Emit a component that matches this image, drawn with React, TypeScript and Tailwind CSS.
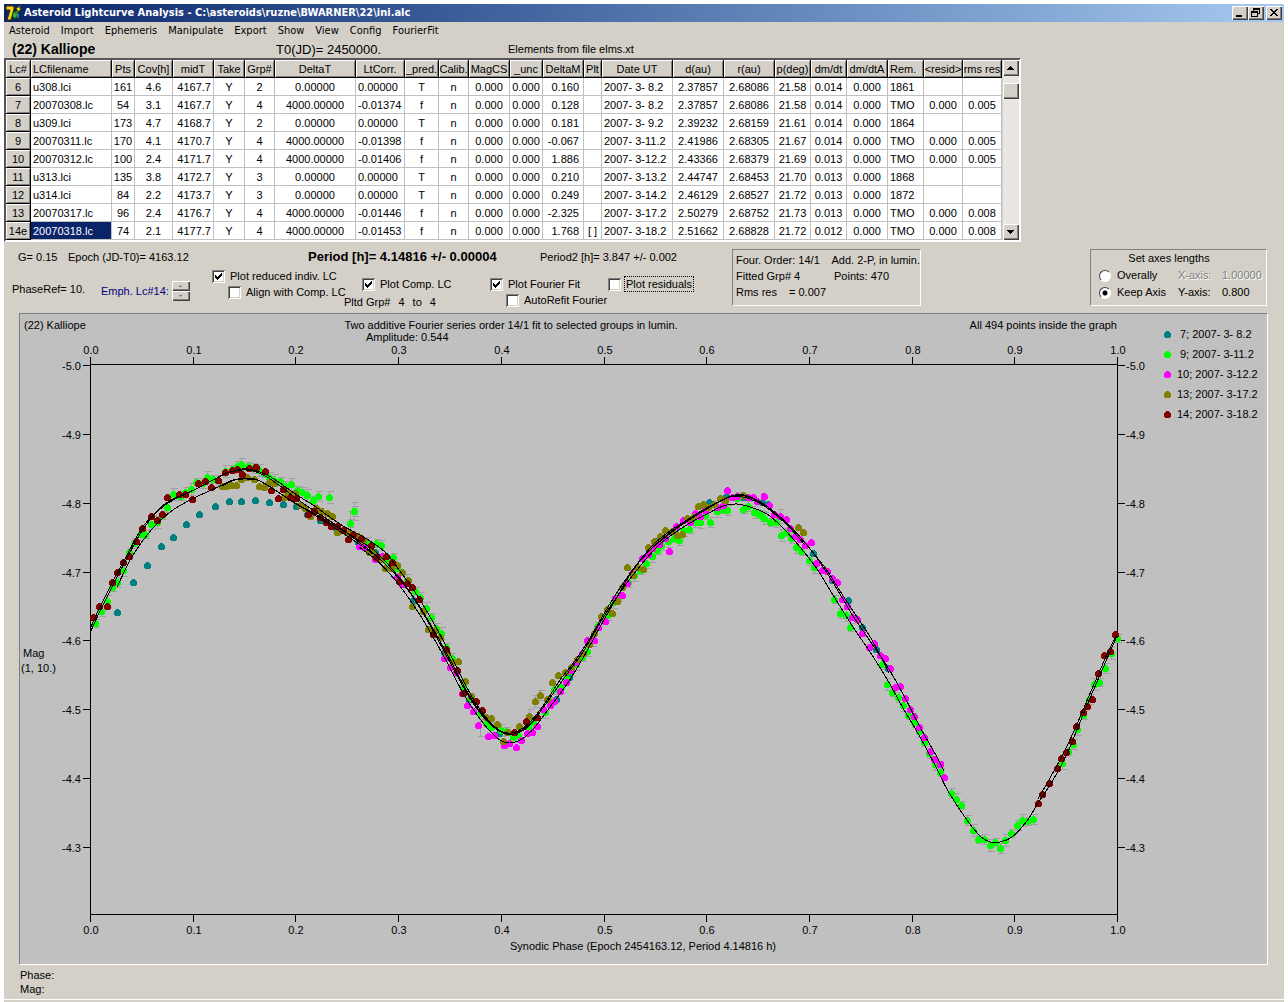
import { useState } from 'react';
import type { ReactNode } from 'react';
import clsx from 'clsx';

interface Column {
  title: string;
  width: number;
  align?: string;
}

interface Series {
  label: string;
  labelX: number;
  color: string;
  points: string;
}

const menuItems = ['Asteroid', 'Import', 'Ephemeris', 'Manipulate', 'Export', 'Show', 'View', 'Config', 'FourierFit'];

const columns: Column[] = [
  { title: 'Lc#', width: 25 },
  { title: 'LCfilename', width: 81, align: 'text-left pl-0.5' },
  { title: 'Pts', width: 23 },
  { title: 'Cov[h]', width: 38 },
  { title: 'midT', width: 41, align: 'text-right pr-0.5' },
  { title: 'Take', width: 31 },
  { title: 'Grp#', width: 30 },
  { title: 'DeltaT', width: 81 },
  { title: 'LtCorr.', width: 49, align: 'text-left pl-0.5' },
  { title: '_pred.', width: 34 },
  { title: 'Calib.', width: 30 },
  { title: 'MagCS', width: 41 },
  { title: '_unc', width: 33 },
  { title: 'DeltaM', width: 41, align: 'text-right pr-1' },
  { title: 'Plt', width: 18 },
  { title: 'Date UT', width: 71, align: 'text-left pl-0.5' },
  { title: 'd(au)', width: 51 },
  { title: 'r(au)', width: 51 },
  { title: 'p(deg)', width: 36 },
  { title: 'dm/dt', width: 36 },
  { title: 'dm/dtA', width: 41 },
  { title: 'Rem.', width: 36, align: 'text-left pl-0.5' },
  { title: '<resid>', width: 39 },
  { title: 'rms res', width: 39 },
];

const rows = [
  ['6', 'u308.lci', '161', '4.6', '4167.7', 'Y', '2', '0.00000', '0.00000', 'T', 'n', '0.000', '0.000', '0.160', '', '2007- 3- 8.2', '2.37857', '2.68086', '21.58', '0.014', '0.000', '1861', '', ''],
  ['7', '20070308.lc', '54', '3.1', '4167.7', 'Y', '4', '4000.00000', '-0.01374', 'f', 'n', '0.000', '0.000', '0.128', '', '2007- 3- 8.2', '2.37857', '2.68086', '21.58', '0.014', '0.000', 'TMO', '0.000', '0.005'],
  ['8', 'u309.lci', '173', '4.7', '4168.7', 'Y', '2', '0.00000', '0.00000', 'T', 'n', '0.000', '0.000', '0.181', '', '2007- 3- 9.2', '2.39232', '2.68159', '21.61', '0.014', '0.000', '1864', '', ''],
  ['9', '20070311.lc', '170', '4.1', '4170.7', 'Y', '4', '4000.00000', '-0.01398', 'f', 'n', '0.000', '0.000', '-0.067', '', '2007- 3-11.2', '2.41986', '2.68305', '21.67', '0.014', '0.000', 'TMO', '0.000', '0.005'],
  ['10', '20070312.lc', '100', '2.4', '4171.7', 'Y', '4', '4000.00000', '-0.01406', 'f', 'n', '0.000', '0.000', '1.886', '', '2007- 3-12.2', '2.43366', '2.68379', '21.69', '0.013', '0.000', 'TMO', '0.000', '0.005'],
  ['11', 'u313.lci', '135', '3.8', '4172.7', 'Y', '3', '0.00000', '0.00000', 'T', 'n', '0.000', '0.000', '0.210', '', '2007- 3-13.2', '2.44747', '2.68453', '21.70', '0.013', '0.000', '1868', '', ''],
  ['12', 'u314.lci', '84', '2.2', '4173.7', 'Y', '3', '0.00000', '0.00000', 'T', 'n', '0.000', '0.000', '0.249', '', '2007- 3-14.2', '2.46129', '2.68527', '21.72', '0.013', '0.000', '1872', '', ''],
  ['13', '20070317.lc', '96', '2.4', '4176.7', 'Y', '4', '4000.00000', '-0.01446', 'f', 'n', '0.000', '0.000', '-2.325', '', '2007- 3-17.2', '2.50279', '2.68752', '21.73', '0.013', '0.000', 'TMO', '0.000', '0.008'],
  ['14e', '20070318.lc', '74', '2.1', '4177.7', 'Y', '4', '4000.00000', '-0.01453', 'f', 'n', '0.000', '0.000', '1.768', '[ ]', '2007- 3-18.2', '2.51662', '2.68828', '21.72', '0.012', '0.000', 'TMO', '0.000', '0.008'],
];

// Drawn in this order, later nights cover earlier ones
const series: Series[] = [
  {
    label: '7; 2007- 3- 8.2',
    labelX: 1180,
    color: '#008080',
    points:
      '117,612 133,582 147,565 161,546 173,537 186,524 199,514 215,506 229,501 241,501 255,500 269,502 283,504 296,506 307,514 320,520 335,527 358,542 375,552 413,600 444,652 469,699 491,727 499,733 556,699 569,677 655,541 709,502 726,496 743,497 762,502 768,504 813,553 832,580 848,600 862,627 876,649 888,668',
  },
  {
    label: '9; 2007- 3-11.2',
    labelX: 1180,
    color: '#00ff00',
    points:
      '95,623 101,611 107,601 112,587 117,582 123,570 129,552 134,543 140,534 145,534 151,524 157,522 162,515 167,507 173,494 180,496 185,492 191,489 196,482 202,483 207,477 213,479 218,480 225,471 232,469 237,466 241,464 248,466 253,468 259,470 264,473 269,477 274,480 280,481 285,486 291,484 297,490 302,492 307,495 313,500 318,496 329,497 350,523 354,511 367,543 376,543 381,545 387,561 393,557 397,568 407,580 415,591 420,597 426,608 431,617 436,628 441,633 446,647 452,658 457,670 463,687 470,698 480,713 486,723 491,727 501,730 506,731 513,737 518,735 528,727 533,722 545,712 550,701 554,689 561,687 566,678 571,671 576,664 582,657 587,651 592,640 597,626 607,615 613,602 618,597 628,582 634,575 640,570 646,563 652,556 657,550 661,545 668,541 674,538 679,540 683,530 689,529 695,522 700,522 705,515 710,522 717,511 722,509 727,510 737,498 743,509 748,506 754,512 759,514 762,516 764,518 770,522 776,522 781,535 786,532 791,538 796,547 801,551 809,560 814,567 834,599 840,613 846,615 850,627 882,664 887,684 892,692 898,697 903,705 908,715 914,722 919,731 924,742 929,753 935,764 940,772 951,793 956,799 961,805 967,820 973,830 978,839 984,839 990,845 995,842 1000,848 1005,840 1011,833 1017,825 1022,820 1027,821 1033,819 1062,763 1068,751 1073,744 1077,729 1083,715 1089,699 1094,684 1099,682 1105,668 1111,653 1117,638',
  },
  {
    label: '10; 2007- 3-12.2',
    labelX: 1177,
    color: '#ff00ff',
    points:
      '359,546 364,547 375,559 382,556 397,577 402,584 444,658 450,667 456,672 462,693 467,705 473,711 478,725 488,736 494,735 504,745 509,743 516,747 521,740 527,733 532,732 537,726 543,709 550,705 554,701 560,691 566,682 571,670 576,662 582,653 587,640 594,640 598,627 605,621 615,598 622,595 627,583 632,573 642,558 648,554 652,548 659,544 665,538 669,551 676,526 683,520 690,522 695,513 700,516 705,510 717,507 723,505 727,490 732,497 737,496 748,497 753,497 757,501 764,496 769,505 774,514 780,516 786,519 790,528 795,536 800,539 805,545 811,542 816,563 822,570 827,571 832,578 837,582 842,599 847,606 852,617 857,619 862,633 869,647 874,643 880,655 885,658 890,668 895,687 900,686 905,698 910,709 914,716 919,727 924,737 930,751 934,759 940,764 944,777',
  },
  {
    label: '13; 2007- 3-17.2',
    labelX: 1177,
    color: '#808000',
    points:
      '222,486 226,486 231,485 236,485 241,479 247,477 254,479 259,486 264,487 269,482 274,483 284,497 288,493 295,493 300,505 305,508 310,516 316,508 321,511 327,513 332,516 337,532 349,532 358,536 363,540 369,552 372,551 378,558 381,559 385,568 391,568 397,565 402,572 408,580 412,606 423,611 428,629 435,630 440,637 447,653 453,662 458,661 465,681 471,696 486,717 491,718 497,724 503,741 507,732 519,726 529,716 535,701 540,695 547,699 552,682 558,675 565,672 571,667 577,659 583,653 589,644 594,633 601,616 607,609 612,613 617,601 622,587 627,567 633,575 637,567 643,569 648,547 654,541 660,536 665,530 672,531 677,535 682,534 687,518 693,517 698,506 703,504 708,507 714,504 720,498 725,500 743,495 798,527 803,532',
  },
  {
    label: '14; 2007- 3-18.2',
    labelX: 1177,
    color: '#800000',
    points:
      '93,617 99,606 107,606 112,582 117,572 123,562 129,556 136,541 142,528 151,516 157,520 162,514 167,497 179,494 185,494 192,499 198,483 205,481 211,487 218,480 225,472 232,470 237,469 242,474 249,468 256,467 265,471 271,490 278,498 283,489 290,497 296,498 308,514 314,511 320,517 326,522 331,526 337,526 343,530 348,539 353,534 361,538 371,545 376,557 386,556 392,562 399,581 407,583 412,587 419,599 433,634 446,649 457,670 463,693 476,701 482,710 514,732 526,721 537,717 1038,803 1042,794 1049,783 1057,768 1061,758 1066,752 1072,741 1076,726 1083,712 1087,706 1092,699 1098,673 1104,655 1110,651 1115,634',
  },
];

const curves = [
  '90,629 100,607 113,581 127,555 142,528 160,508 173,499 185,494 200,487 213,480 227,473 242,469 253,470 267,475 280,483 297,495 313,505 327,515 343,526 360,535 376,545 387,554 397,567 410,585 420,600 437,629 452,658 465,684 477,705 490,722 503,732 517,732 530,724 543,708 557,688 570,670 583,652 597,628 610,607 633,575 657,547 673,534 690,523 707,514 723,506 737,504 750,507 767,514 783,528 800,547 817,569 833,595 853,627 870,652 887,679 903,708 920,737 937,769 948,791 967,820 980,836 990,842 1000,842 1012,837 1027,821 1038,803 1053,780 1067,754 1078,727 1090,698 1103,668 1117,636',
  '90,633 101,609 113,585 127,558 142,531 158,511 173,500 186,494 200,487 213,480 227,473 242,470 253,471 267,477 280,486 297,499 313,510 327,519 343,530 360,543 373,553 390,569 405,586 420,608 437,638 452,666 465,690 477,709 490,724 503,733 514,734 527,728 540,713',
  '117,587 133,555 152,529 170,512 190,500 207,492 222,485 233,480 247,478 258,480 273,489 293,502 313,514 333,527 353,540 373,554',
  '222,486 235,480 247,479 260,481 275,490 295,503 315,514 335,526 355,538 375,551 393,570 410,592 425,615 440,641 453,665 465,688 478,709 492,725 506,733 518,731 530,722 545,703 560,680 575,661 590,638 605,612 620,588 637,564 653,545 670,531 687,520 703,510 718,502 732,496 745,496 757,501 771,511 788,526 805,545',
  '359,547 375,559 390,574 403,590 420,615 437,644 450,668 463,693 475,712 488,729 500,740 510,743 522,739 535,727 550,707 567,684 583,658 600,627 617,597 633,570 650,550 667,536 683,524 700,513 717,503 730,497 743,497 757,502 773,512 790,527 807,545 823,567 840,594 853,616 870,641 887,666 903,694 920,727 937,757 944,771',
  '655,545 672,531 690,519 707,509 722,500 735,495 748,496 762,503 778,515 795,531 810,549 826,569 840,591 855,614 872,640 889,673',
  '1038,799 1050,778 1062,756 1074,731 1086,703 1098,675 1109,650 1117,635',
];

const ticksX = [90, 193, 295, 398, 501, 604, 706, 809, 912, 1014, 1117];
const ticksY = [365, 434, 503, 572, 640, 709, 778, 847];

function parse(points: string) {
  return points.split(' ').map(p => p.split(',').map(Number));
}

// Catmull-Rom spline through the points
function smooth(points: string) {
  const p = parse(points);
  let d = `M${p[0][0]} ${p[0][1]}`;
  for (let i = 0; i < p.length - 1; i++) {
    const a = p[Math.max(i - 1, 0)];
    const b = p[i];
    const c = p[i + 1];
    const e = p[Math.min(i + 2, p.length - 1)];
    d += `C${b[0] + (c[0] - a[0]) / 6} ${b[1] + (c[1] - a[1]) / 6} ${c[0] - (e[0] - b[0]) / 6} ${c[1] - (e[1] - b[1]) / 6} ${c[0]} ${c[1]}`;
  }
  return d;
}

function errorBar(x: number, y: number, e: number) {
  return `M${x - 3} ${y - e}h7M${x - 3} ${y + e}h7M${x} ${y - e}v${2 * e}`;
}

const raised =
  'bg-[#d4d0c8] shadow-[inset_1px_1px_0_#fff,inset_-1px_-1px_0_#404040,inset_-2px_-2px_0_#808080]';

function TitleButton({ label, children }: { label: string; children: ReactNode }) {
  return (
    <button aria-label={label} className={clsx('w-4 h-3.5', raised)}>
      <svg viewBox="0 0 16 14" className="w-4 h-3.5" shapeRendering="crispEdges">
        {children}
      </svg>
    </button>
  );
}

function TitleBar() {
  return (
    <header className="flex items-center h-[18px] pl-0.5 pr-0.5 bg-linear-to-r from-[#0a246a] to-[#a6caf0]">
      <svg viewBox="0 0 16 16" className="w-4 h-4">
        <circle cx="9.5" cy="10" r="4.5" fill="#0b5a3c" stroke="#001a10" />
        <path d="M7 8l3-1 1 3-2 3-2-2z" fill="#2fb344" />
        <path d="M11 9l2 0 0 3-2 1z" fill="#3a6fd8" />
        <path d="M0 1h8v3L5 15H1L4 5H0z" fill="#f5d21c" stroke="#3a2a00" />
        <path d="M15 0l-5 4 2 1-3 4 6-5-2-1z" fill="#ffff00" stroke="#4d4d00" strokeWidth="0.5" />
      </svg>
      <h1 className="ml-0.5 font-['DejaVu_Sans_Condensed','DejaVu_Sans',sans-serif] text-[11px] font-bold text-white whitespace-nowrap">
        Asteroid Lightcurve Analysis - C:\asteroids\ruzne\BWARNER\22\ini.alc
      </h1>
      <div className="flex ml-auto">
        <TitleButton label="Minimize">
          <path d="M4 9h6v2H4z" />
        </TitleButton>
        <TitleButton label="Restore">
          <path d="M5 2h7v6h-2V7h1V4H6v1H5zM3 5h7v6H3zM4 7v3h5V7z" fillRule="evenodd" />
        </TitleButton>
        <span className="w-0.5" />
        <TitleButton label="Close">
          <path d="M4 3h2v1h1v1h2V4h1V3h2v1h-1v1h-1v1H9v1h1v1h1v1h1v1h-2V9H9V8H7v1H6v1H4V9h1V8h1V7h1V6H6V5H5V4H4z" />
        </TitleButton>
      </div>
    </header>
  );
}

function LightcurveTable() {
  return (
    <div className="flex w-fit border-2 border-t-[#555] border-l-[#555] border-r-white border-b-white">
      <table className="w-[996px] table-fixed border-separate border-spacing-0 bg-white leading-4">
        <colgroup>
          {columns.map(col => (
            <col key={col.title} style={{ width: col.width }} />
          ))}
        </colgroup>
        <thead>
          <tr>
            {columns.map(col => (
              <th
                key={col.title}
                className={clsx(
                  'h-[18px] p-0 font-normal whitespace-nowrap border-r border-b border-black bg-[#d4d0c8] shadow-[inset_1px_1px_0_#fff,inset_-1px_-1px_0_#808080]',
                  col.title === 'LCfilename' || col.title === 'Rem.' ? 'text-left pl-0.5' : 'text-center'
                )}
              >
                {col.title}
              </th>
            ))}
          </tr>
        </thead>
        <tbody>
          {rows.map((row, r) => (
            <tr key={row[0]}>
              {row.map((cell, c) => (
                <td
                  key={c}
                  className={clsx(
                    'h-[18px] p-0 whitespace-nowrap border-r border-b',
                    c === 0
                      ? 'border-black bg-[#d4d0c8] shadow-[inset_1px_1px_0_#fff,inset_-1px_-1px_0_#808080]'
                      : 'border-[#c0c0c0]',
                    r === rows.length - 1 && c === 1 && 'bg-[#0a246a] text-white',
                    columns[c].align ?? 'text-center'
                  )}
                >
                  {cell}
                </td>
              ))}
            </tr>
          ))}
        </tbody>
      </table>
      <div className="flex flex-col w-4 ml-px bg-[#e9e7e3]">
        <button aria-label="Scroll up" className={clsx('h-4', raised)}>
          <svg viewBox="0 0 16 16" className="w-4 h-4" shapeRendering="crispEdges">
            <path d="M7 6h1v1h1v1h1v1h1v1H4V9h1V8h1V7h1z" />
          </svg>
        </button>
        <div className={clsx('mt-[7px] h-4', raised)} />
        <button aria-label="Scroll down" className={clsx('mt-auto h-4', raised)}>
          <svg viewBox="0 0 16 16" className="w-4 h-4" shapeRendering="crispEdges">
            <path d="M4 6h7v1h-1v1H9v1H8v1H7V9H6V8H5V7H4z" />
          </svg>
        </button>
      </div>
    </div>
  );
}

function Checkbox({ label, on = false, focused = false }: { label: string; on?: boolean; focused?: boolean }) {
  const [checked, setChecked] = useState(on);

  return (
    <label className="flex items-center h-4 gap-1 whitespace-nowrap">
      <span className="grid">
        <input
          type="checkbox"
          checked={checked}
          onChange={e => setChecked(e.target.checked)}
          className="col-start-1 row-start-1 appearance-none w-[13px] h-[13px] bg-white shadow-[inset_1px_1px_0_#808080,inset_-1px_-1px_0_#fff,inset_2px_2px_0_#404040,inset_-2px_-2px_0_#d4d0c8]"
        />
        {checked && (
          <svg viewBox="0 0 13 13" className="col-start-1 row-start-1 w-[13px] h-[13px] pointer-events-none" shapeRendering="crispEdges">
            <path d="M3 5h1v1h1v1h1V6h1V5h1V4h1V3h1v3H9v1H8v1H7v1H6v1H5V9H4V8H3z" />
          </svg>
        )}
      </span>
      <span className={clsx('px-px leading-[14px]', focused && 'outline-1 outline-dotted outline-black')}>{label}</span>
    </label>
  );
}

function AxisRadio({ label, checked, onSelect }: { label: string; checked: boolean; onSelect: () => void }) {
  return (
    <label className="flex items-center gap-1.5 w-[79px]">
      <input
        type="radio"
        name="axes"
        checked={checked}
        onChange={onSelect}
        className={clsx(
          'appearance-none w-3 h-3 rounded-full border border-t-[#404040] border-l-[#404040] border-r-white border-b-white',
          checked ? 'bg-[radial-gradient(circle,#000_2px,#fff_3px)]' : 'bg-white'
        )}
      />
      {label}
    </label>
  );
}

const sunken = 'border border-t-[#808080] border-l-[#808080] border-r-white border-b-white';

function Controls() {
  const [keepAxis, setKeepAxis] = useState(true);

  return (
    <section className="flex items-start h-[71px] pr-[17px]">
      <div className="w-[728px] shrink-0 whitespace-nowrap">
        <div className="flex h-[25px] pt-[7px] leading-4">
          <span className="ml-3.5 w-[50px]">G= 0.15</span>
          <span className="w-60">Epoch (JD-T0)= 4163.12</span>
          <b className="w-58 text-[13px]">Period [h]= 4.14816 +/- 0.00004</b>
          <span>Period2 [h]= 3.847 +/- 0.002</span>
        </div>
        <div className="flex items-start">
          <span className="ml-2 mt-3.5 w-[89px] leading-4">PhaseRef= 10.</span>
          <label htmlFor="emph" className="mt-4 w-[71px] leading-4 text-[#000080]">
            Emph. Lc#14:
          </label>
          <div className="flex flex-col mt-3.5 w-10">
            <button id="emph" aria-label="Next lightcurve" className={clsx('w-[18px] h-2.5', raised)}>
              <svg viewBox="0 0 18 10" className="w-[18px] h-2.5" shapeRendering="crispEdges">
                <path d="M8 4h1v1h1v1H7V5h1z" fill="#808080" />
              </svg>
            </button>
            <button aria-label="Previous lightcurve" className={clsx('w-[18px] h-2.5', raised)}>
              <svg viewBox="0 0 18 10" className="w-[18px] h-2.5" shapeRendering="crispEdges">
                <path d="M7 4h3v1H9v1H8V5H7z" fill="#808080" />
              </svg>
            </button>
          </div>
          <div className="w-[128px] pt-px">
            <Checkbox label="Plot reduced indiv. LC" on />
            <div className="pl-4">
              <Checkbox label="Align with Comp. LC" />
            </div>
          </div>
          <div className="mt-[9px] w-[150px]">
            <div className="pl-[22px]">
              <Checkbox label="Plot Comp. LC" on />
            </div>
            <div className="flex gap-2 pl-1 pt-0.5 leading-4">
              <span>Pltd Grp#</span>
              <span>4</span>
              <span>to</span>
              <span>4</span>
            </div>
          </div>
          <div className="mt-[9px] w-[118px]">
            <Checkbox label="Plot Fourier Fit" on />
            <div className="pl-4">
              <Checkbox label="AutoRefit Fourier" />
            </div>
          </div>
          <div className="mt-[9px]">
            <Checkbox label="Plot residuals" focused />
          </div>
        </div>
      </div>

      <div className={clsx('mt-[7px] w-[189px] h-[57px] pl-[3px] pt-0.5 leading-4 whitespace-nowrap', sunken)}>
        <div className="flex">
          <span className="w-[98px]">Four. Order: 14/1</span>
          <span>Add. 2-P, in lumin.</span>
        </div>
        <div className="flex">
          <span className="w-[98px]">Fitted Grp# 4</span>
          <span>Points: 470</span>
        </div>
        <div className="flex">
          <span className="w-[53px]">Rms res</span>
          <span>= 0.007</span>
        </div>
      </div>

      <fieldset className={clsx('mt-[7px] ml-auto w-[177px] h-[57px] pl-2 leading-[17px] whitespace-nowrap', sunken)}>
        <p className="w-[140px] text-center">Set axes lengths</p>
        <div className="flex">
          <AxisRadio label="Overally" checked={!keepAxis} onSelect={() => setKeepAxis(false)} />
          <span className="w-11 text-[#808080] [text-shadow:1px_1px_0_#fff]">X-axis:</span>
          <span className="text-[#808080] [text-shadow:1px_1px_0_#fff]">1.00000</span>
        </div>
        <div className="flex">
          <AxisRadio label="Keep Axis" checked={keepAxis} onSelect={() => setKeepAxis(true)} />
          <span className="w-11">Y-axis:</span>
          <span>0.800</span>
        </div>
      </fieldset>
    </section>
  );
}

function Chart() {
  return (
    <div className={clsx('ml-[15px] mr-4 bg-[#c0c0c0]', sunken)}>
      <svg viewBox="20 314 1247 650" className="block w-full text-[11px]" role="img" aria-label="Lightcurve of (22) Kalliope">
        <text x="24" y="329">(22) Kalliope</text>
        <text x="511" y="329" textAnchor="middle">
          Two additive Fourier series order 14/1 fit to selected groups in lumin.
        </text>
        <text x="366" y="341">Amplitude: 0.544</text>
        <text x="1117" y="329" textAnchor="end">All 494 points inside the graph</text>

        <g stroke="#000" fill="none" shapeRendering="crispEdges">
          <path d="M90.5 364.5H1117.5V914.5H90.5z" />
          {ticksX.map(x => (
            <path key={x} d={`M${x + 0.5} 357v7M${x + 0.5} 915v7`} />
          ))}
          {ticksY.map(y => (
            <path key={y} d={`M83 ${y + 0.5}h7M1118 ${y + 0.5}h7`} />
          ))}
        </g>
        {ticksX.map((x, i) => (
          <g key={x} textAnchor="middle">
            <text x={x + 1} y="354">{(i / 10).toFixed(1)}</text>
            <text x={x + 1} y="934">{(i / 10).toFixed(1)}</text>
          </g>
        ))}
        {ticksY.map((y, i) => (
          <g key={y}>
            <text x="81" y={y + 5} textAnchor="end">{(i / 10 - 5).toFixed(1)}</text>
            <text x="1126" y={y + 5}>{(i / 10 - 5).toFixed(1)}</text>
          </g>
        ))}
        <text x="23" y="657">Mag</text>
        <text x="21" y="672">(1, 10.)</text>
        <text x="643" y="950" textAnchor="middle">Synodic Phase (Epoch 2454163.12, Period 4.14816 h)</text>

        <g stroke="#a0a0a0" fill="none" shapeRendering="crispEdges" transform="translate(0.5 0.5)">
          {parse(series[1].points).map(([x, y], i) => (
            <path key={i} d={errorBar(x, y, 4 + (i % 3))} />
          ))}
          <path d={errorBar(350, 523, 12)} />
          <path d={errorBar(354, 511, 9)} />
          <path d={errorBar(480, 725, 11)} />
          <path d={errorBar(529, 716, 7)} />
          <path d={errorBar(535, 701, 6)} />
          <path d={errorBar(540, 695, 5)} />
          <path d={errorBar(780, 516, 7)} />
        </g>
        {series.map(s => (
          <g key={s.label} fill={s.color}>
            {parse(s.points).map(([x, y], i) => (
              <circle key={i} cx={x + 0.5} cy={y + 0.5} r="3.5" shapeRendering="crispEdges" />
            ))}
          </g>
        ))}
        <g stroke="#000" fill="none" shapeRendering="crispEdges">
          {curves.map(c => (
            <path key={c} d={smooth(c)} />
          ))}
        </g>

        {series.map((s, i) => (
          <g key={s.label}>
            <circle cx="1167.5" cy={334.5 + i * 20} r="3.5" fill={s.color} shapeRendering="crispEdges" />
            <text x={s.labelX} y={338 + i * 20}>{s.label}</text>
          </g>
        ))}
      </svg>
    </div>
  );
}

export default function App() {
  return (
    <div className="px-1 pt-1 bg-white font-['Liberation_Sans',Arial,sans-serif] text-[11px] text-black">
      <div className="bg-[#d4d0c8]">
        <TitleBar />
        <nav className="flex gap-[11px] pl-[5px] h-[19px] items-center font-['DejaVu_Sans_Condensed','DejaVu_Sans',sans-serif]">
          {menuItems.map(item => (
            <button key={item}>{item}</button>
          ))}
        </nav>
        <div className="flex items-center h-[17px] pl-2">
          <h2 className="w-66 text-[14px] font-bold">(22) Kalliope</h2>
          <span className="w-58 text-[13px]">T0(JD)= 2450000.</span>
          <span>Elements from file elms.xt</span>
        </div>
        <LightcurveTable />
        <Controls />
        <Chart />
        <footer className="pl-4 pt-[3px] h-[34px] leading-[14px]">
          <p>Phase:</p>
          <p>Mag:</p>
        </footer>
        <div className="h-[3px] border-t border-white" />
      </div>
    </div>
  );
}
